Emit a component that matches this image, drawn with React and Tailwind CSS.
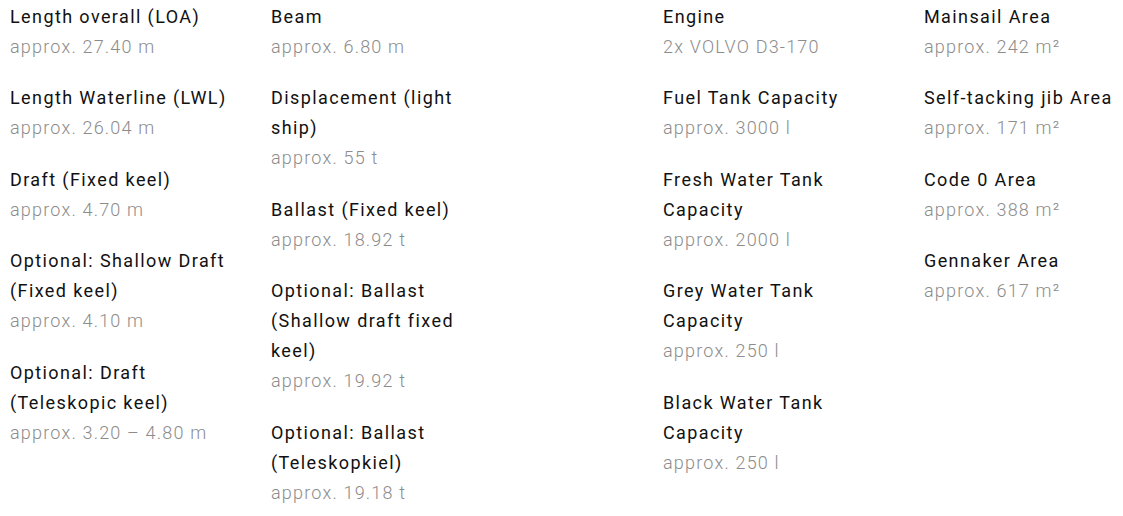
const groups = [
  [
    [
      ["Length overall (LOA)", "approx. 27.40 m"],
      ["Length Waterline (LWL)", "approx. 26.04 m"],
      ["Draft (Fixed keel)", "approx. 4.70 m"],
      ["Optional: Shallow Draft (Fixed keel)", "approx. 4.10 m"],
      ["Optional: Draft (Teleskopic keel)", "approx. 3.20 – 4.80 m"],
    ],
    [
      ["Beam", "approx. 6.80 m"],
      ["Displacement (light ship)", "approx. 55 t"],
      ["Ballast (Fixed keel)", "approx. 18.92 t"],
      ["Optional: Ballast (Shallow draft fixed keel)", "approx. 19.92 t"],
      ["Optional: Ballast (Teleskopkiel)", "approx. 19.18 t"],
    ],
  ],
  [
    [
      ["Engine", "2x VOLVO D3-170"],
      ["Fuel Tank Capacity", "approx. 3000 l"],
      ["Fresh Water Tank Capacity", "approx. 2000 l"],
      ["Grey Water Tank Capacity", "approx. 250 l"],
      ["Black Water Tank Capacity", "approx. 250 l"],
    ],
    [
      ["Mainsail Area", "approx. 242 m²"],
      ["Self-tacking jib Area", "approx. 171 m²"],
      ["Code 0 Area", "approx. 388 m²"],
      ["Gennaker Area", "approx. 617 m²"],
    ],
  ],
];

function Spec({ label, value }) {
  return (
    <div className="mb-[21.6px]">
      <div className="text-[#111] font-normal tracking-[1.4px]">{label}</div>
      <div className="text-[#8c8c8c] font-light tracking-[1.2px]">{value}</div>
    </div>
  );
}

export default function App() {
  return (
    <div
      className="bg-white w-[1123px] h-[516px] overflow-hidden pl-[10px] pt-[1.5px] grid grid-cols-[653px_1fr] text-[18px] leading-[30px]"
      style={{ fontFamily: "Roboto, 'Liberation Sans', sans-serif" }}
    >
      {groups.map((cols, g) => (
        <div key={g} className="grid grid-cols-[222px_222px] gap-x-[39px] items-start">
          {cols.map((col, c) => (
            <div key={c}>
              {col.map(([l, v]) => (
                <Spec key={l} label={l} value={v} />
              ))}
            </div>
          ))}
        </div>
      ))}
    </div>
  );
}
